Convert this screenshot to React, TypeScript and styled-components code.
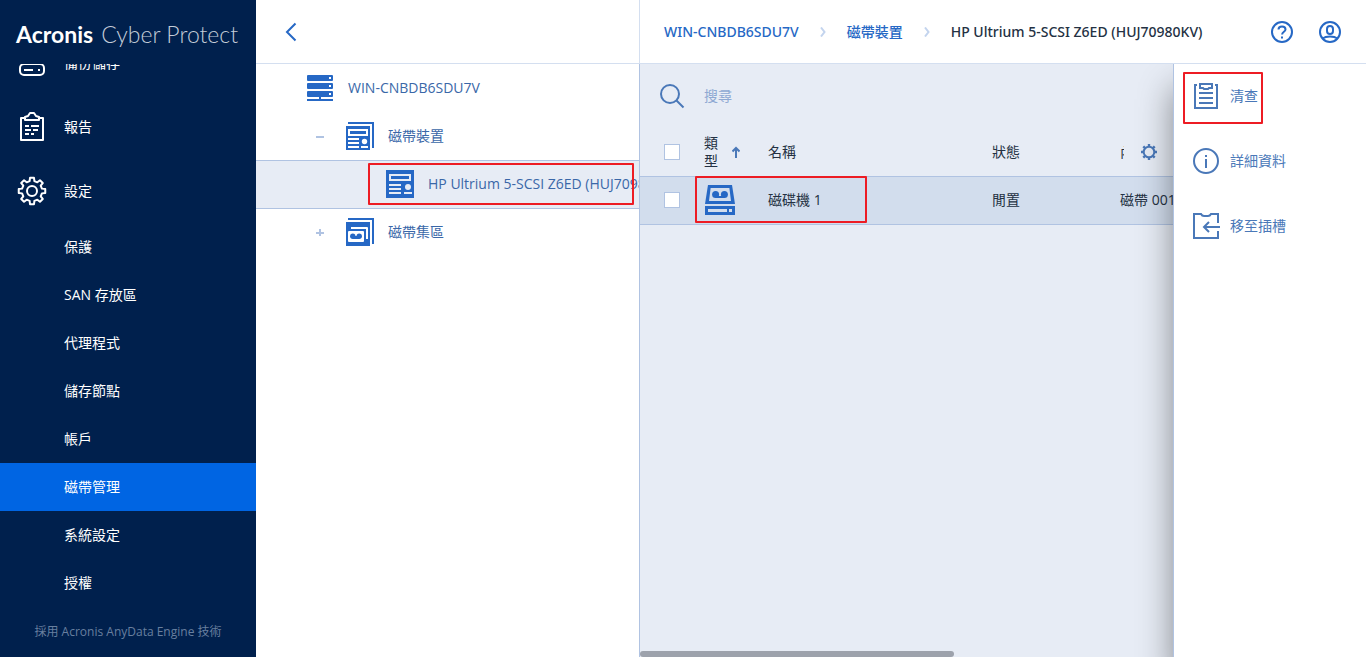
import React, { useLayoutEffect, useRef } from "react";
import styled, { createGlobalStyle, css } from "styled-components";

const color = {
  navy: "#00204d",
  active: "#0065e3",
  blue: "#2668c5",
  action: "#4a78b8",
  line: "#b0c3e2",
  headerLine: "#d4dff0",
  panel: "#e7ecf5",
  selected: "#d2dded",
  text: "#243143",
  link: "#3a67a8",
  mark: "#ed1c24",
};

const GlobalStyle = createGlobalStyle`
  *, *::before, *::after { box-sizing: border-box; }
  body {
    margin: 0;
    font: 14px/18px "Open Sans", "Noto Sans CJK TC", sans-serif;
    color: ${color.text};
  }
  button { font: inherit; color: inherit; border: 0; padding: 0; background: none; cursor: pointer; }
  a { color: inherit; text-decoration: none; }
  svg { display: block; flex: none; }
  ul, ol { list-style: none; margin: 0; padding: 0; }
`;

const Page = styled.div`
  display: flex;
  height: 100vh;
  overflow: hidden;
`;

const Sidebar = styled.aside`
  display: flex;
  flex-direction: column;
  flex: none;
  width: 256px;
  background: ${color.navy};
  color: #fff;
`;

const Logo = styled.div`
  display: flex;
  align-items: baseline;
  flex: none;
  gap: 8px;
  height: 64px;
  padding: 20px 0 0 16px;
  font: 700 23px/28px Lato, sans-serif;
  white-space: nowrap;
`;

const LogoProduct = styled.span`
  color: #c3ccd8;
  font-weight: 300;
`;

const Nav = styled.nav`
  flex: 1;
  min-height: 0;
  overflow-y: auto;
  scrollbar-width: none;
`;

const NavLink = styled.a`
  display: flex;
  align-items: center;
  height: 64px;
`;

const NavIcon = styled.span`
  display: flex;
  justify-content: center;
  width: 64px;
`;

const SubLink = styled.a<{ $active?: boolean }>`
  display: flex;
  align-items: center;
  height: 48px;
  padding-left: 64px;
  background: ${(p) => (p.$active ? color.active : "transparent")};
`;

const PoweredBy = styled.footer`
  display: flex;
  align-items: center;
  justify-content: center;
  flex: none;
  height: 50px;
  font-size: 12px;
  color: #687f9f;
`;

const TreePanel = styled.section`
  display: flex;
  flex-direction: column;
  flex: none;
  width: 384px;
  background: #fff;
`;

const TopBar = styled.header<{ $divided?: boolean }>`
  display: flex;
  align-items: center;
  flex: none;
  height: 64px;
  background: #fff;
  border-bottom: 1px solid ${color.headerLine};
  border-right: ${(p) => (p.$divided ? `1px solid ${color.headerLine}` : "0")};
`;

const BackButton = styled.button`
  display: flex;
  align-items: center;
  justify-content: center;
  width: 70px;
  height: 48px;
`;

const Tree = styled.ul`
  flex: 1;
  overflow: hidden;
  border-right: 1px solid ${color.line};
`;

const TreeRow = styled.li<{ $level: number; $selected?: boolean }>`
  position: relative;
  display: flex;
  align-items: center;
  height: 48px;
  padding-left: ${(p) => 44 + p.$level * 40}px;
  color: ${color.link};
  white-space: nowrap;
  ${(p) =>
    p.$selected &&
    css`
      background: ${color.panel};
      box-shadow: inset 0 1px ${color.line}, 0 1px ${color.line};
    `}
`;

const TreeIcon = styled.span`
  display: flex;
  justify-content: center;
  flex: none;
  width: 40px;
  margin-right: 8px;
`;

const Expander = styled.button`
  display: flex;
  justify-content: center;
  flex: none;
  width: 40px;
  margin-left: -40px;
`;

const Main = styled.main`
  display: flex;
  flex-direction: column;
  flex: 1;
  min-width: 0;
`;

const Breadcrumbs = styled.ol`
  display: flex;
  align-items: center;
  flex: 1;
  min-width: 0;
  padding-left: 24px;
  white-space: nowrap;
  font-family: "Noto Sans", "Noto Sans CJK TC", sans-serif;
  font-weight: 500;
`;

const Crumb = styled.li<{ $current?: boolean }>`
  display: flex;
  align-items: center;
  color: ${(p) => (p.$current ? color.text : color.blue)};
`;

const Separator = styled.span`
  display: flex;
  justify-content: center;
  width: 48px;
`;

const TopActions = styled.div`
  display: flex;
  padding-right: 12px;
`;

const IconButton = styled.button`
  display: flex;
  align-items: center;
  justify-content: center;
  width: 48px;
  height: 48px;
`;

const Workspace = styled.div`
  display: flex;
  flex: 1;
  min-height: 0;
  overflow: hidden;
`;

const ListArea = styled.section`
  display: flex;
  flex-direction: column;
  flex: 1;
  min-width: 0;
  background: ${color.panel};
`;

const SearchBar = styled.label`
  display: flex;
  align-items: center;
  height: 64px;
`;

const SearchIconBox = styled.span`
  display: flex;
  justify-content: center;
  width: 64px;
`;

const SearchInput = styled.input`
  flex: 1;
  min-width: 0;
  padding: 0;
  border: 0;
  outline: 0;
  background: none;
  font: inherit;
  &::placeholder { color: #8fa9d3; opacity: 1; }
`;

const TableArea = styled.div`
  position: relative;
  flex: 1;
  overflow: hidden;
`;

const Table = styled.table`
  width: 905px;
  table-layout: fixed;
  border-collapse: separate;
  border-spacing: 0;
`;

const HeadCell = styled.th<{ $width?: number }>`
  width: ${(p) => (p.$width ? `${p.$width}px` : "auto")};
  height: 48px;
  padding: 0;
  font-weight: 400;
  text-align: left;
`;

const SortHeader = styled.button`
  display: flex;
  align-items: center;
  gap: 12px;
  text-align: left;
`;

const SortLabel = styled.span`
  width: 16px;
`;

const Cell = styled.td`
  position: relative;
  height: 49px;
  padding: 0 0 1px;
  background: ${color.selected};
  border: solid ${color.line};
  border-width: 1px 0;
`;

const Check = styled.input`
  display: block;
  appearance: none;
  width: 16px;
  height: 16px;
  margin: 0 0 0 24px;
  background: #fff;
  border: 1px solid ${color.line};
`;

const ColumnSettings = styled.button`
  position: absolute;
  top: 0;
  right: 0;
  display: flex;
  align-items: center;
  justify-content: center;
  width: 49px;
  height: 48px;
  background: ${color.panel};
`;

const ScrollTrack = styled.div`
  flex: none;
  height: 6px;
`;

const ScrollThumb = styled.div`
  width: 59%;
  height: 6px;
  border-radius: 3px;
  background: #9da2ac;
`;

const ActionPanel = styled.aside`
  position: relative;
  display: flex;
  flex-direction: column;
  gap: 1px;
  flex: none;
  width: 193px;
  background: #fff;
  border-left: 1px solid ${color.line};
  box-shadow: 0 24px 32px rgba(0, 0, 0, 0.42);
`;

const ActionButton = styled.button`
  position: relative;
  display: flex;
  align-items: center;
  height: 64px;
  color: ${color.action};
`;

const ActionIcon = styled.span`
  display: flex;
  justify-content: center;
  width: 64px;
  margin-right: -8px;
`;

const Mark = styled.span<{ $top: number; $left: number; $width: number; $height: number }>`
  position: absolute;
  z-index: 1;
  top: ${(p) => p.$top}px;
  left: ${(p) => p.$left}px;
  width: ${(p) => p.$width}px;
  height: ${(p) => p.$height}px;
  border: 2px solid ${color.mark};
  border-radius: 1px;
  pointer-events: none;
`;

/* Outline of a toothed wheel centred on (c, c). */
function gearPath(c: number, outer: number, inner: number, teeth: number) {
  const step = (Math.PI * 2) / teeth;
  const points: string[] = [];
  for (let i = 0; i < teeth; i++) {
    const a = i * step - Math.PI / 2;
    const pairs: [number, number][] = [
      [-0.3, inner],
      [-0.19, outer],
      [0.19, outer],
      [0.3, inner],
    ];
    pairs.forEach(([t, r]) => {
      points.push(`${(c + r * Math.cos(a + t * step)).toFixed(2)} ${(c + r * Math.sin(a + t * step)).toFixed(2)}`);
    });
  }
  return `M${points.join("L")}Z`;
}

const StorageIcon = () => (
  <svg width="26" height="26" viewBox="0 0 26 26" fill="none" stroke="#fff" strokeWidth="2">
    <rect x="1" y="1" width="24" height="10" rx="4" />
    <rect x="1" y="14" width="24" height="11" rx="4" />
    <path d="M5 6h9M19 6h2M5 20h9M19 20h2" />
  </svg>
);

const ReportIcon = () => (
  <svg width="26" height="30" viewBox="0 0 26 30" fill="none" stroke="#fff" strokeWidth="2" strokeLinejoin="round">
    <path d="M6 6H2v22h22V6h-4" />
    <path d="M6 8V5l3-1 2-3h4l2 3 3 1v3z" />
    <path d="M6 14h4M12 14h8M6 18h6M14 18h5M6 22h4M12 22h3" />
  </svg>
);

const SettingsIcon = () => (
  <svg width="30" height="30" viewBox="0 0 30 30" fill="none" stroke="#fff" strokeWidth="2" strokeLinejoin="round">
    <path d={gearPath(15, 13.4, 10.2, 8)} />
    <circle cx="15" cy="15" r="5" />
  </svg>
);

const BackIcon = () => (
  <svg width="12" height="20" viewBox="0 0 12 20" fill="none" stroke={color.blue} strokeWidth="2">
    <path d="M10.500 1.500L2 10l8.500 8.500" />
  </svg>
);

const ServerIcon = () => (
  <svg width="26" height="26" viewBox="0 0 26 26" fill={color.blue}>
    <rect width="26" height="6" rx="1" />
    <rect y="8" width="26" height="6" rx="1" />
    <rect y="16" width="26" height="6" rx="1" />
    <path d="M12 22h2v2h12v2H0v-2h12z" />
    <path fill="#fff" d="M22 2h2v2h-2zM22 10h2v2h-2zM22 18h2v2h-2z" />
  </svg>
);

const StackEdge = () => <path d="M2 0h26v26h-2V2H2z" fill={color.blue} />;

const DevicesIcon = () => (
  <svg width="28" height="28" viewBox="0 0 28 28">
    <StackEdge />
    <path d="M0 4h24v24H0z" fill={color.blue} />
    <path d="M2 7h20v7H2zM2 16h11v2H2zM2 20h11v2H2zM2 24h11v2H2zM15 24h7v2h-7z" fill="#fff" />
    <path d="M4 9h16v3H4z" fill={color.blue} />
    <circle cx="18.500" cy="19.500" r="2.700" fill="#fff" />
  </svg>
);

const DeviceIcon = () => (
  <svg width="28" height="28" viewBox="0 0 28 28">
    <path d="M0 0h28v28H0z" fill={color.blue} />
    <path d="M3 4h22v7H3zM3 14h12v2H3zM3 18h12v2H3zM3 22h12v2H3zM18 22h8v2h-8z" fill={color.panel} />
    <path d="M5 6h18v3H5z" fill={color.blue} />
    <circle cx="22" cy="17" r="3" fill={color.panel} />
  </svg>
);

const PoolsIcon = () => (
  <svg width="28" height="28" viewBox="0 0 28 28">
    <StackEdge />
    <path d="M0 4h24v24H0z" fill={color.blue} />
    <path d="M5 9h16q1 0 1 1v11h-2V11H5z" fill="#fff" />
    <rect x="2" y="13" width="16" height="11" rx="1" fill="#fff" />
    <path d="M7 18h6v3H7z" fill={color.blue} />
    <circle cx="6.800" cy="18.300" r="2.700" fill={color.blue} />
    <circle cx="13.200" cy="18.300" r="2.700" fill={color.blue} />
  </svg>
);

const DriveIcon = () => (
  <svg width="32" height="30" viewBox="-1 0 32 30">
    <path d="M3 0h24l3 19H0z" fill={color.blue} />
    <path d="M5.600 3h18.800l1.600 13H4z" fill={color.selected} />
    <circle cx="10.600" cy="9.500" r="3.500" fill={color.blue} />
    <circle cx="19.400" cy="9.500" r="3.500" fill={color.blue} />
    <path d="M10.600 11h8.800v2h-8.800zM0 21h30v9H0z" fill={color.blue} />
    <path d="M3 24h19v3H3zM24 24h3v3h-3z" fill={color.selected} />
  </svg>
);

const MinusIcon = () => (
  <svg width="8" height="8" viewBox="0 0 8 8" stroke={color.line} strokeWidth="2">
    <path d="M0 5h8" />
  </svg>
);

const PlusIcon = () => (
  <svg width="8" height="8" viewBox="0 0 8 8" stroke={color.line} strokeWidth="2">
    <path d="M0 5h8M4 1v8" />
  </svg>
);

const CrumbIcon = () => (
  <svg width="6" height="10" viewBox="0 0 6 10" fill="none" stroke="#c3d4ee" strokeWidth="2">
    <path d="M1 .500L4.500 5 1 9.500" />
  </svg>
);

const HelpIcon = () => (
  <svg width="24" height="24" viewBox="0 0 24 24" fill="none" stroke={color.blue} strokeWidth="2">
    <circle cx="12" cy="12" r="10" />
    <path d="M8.500 9.500C8.500 7.500 10 6.500 12 6.500s3.500 1.200 3.500 3c0 2.300-3.400 2.300-3.400 5M12 16.500v2" />
  </svg>
);

const UserIcon = () => (
  <svg width="24" height="24" viewBox="0 0 24 24" fill="none" stroke={color.blue} strokeWidth="2">
    <circle cx="12" cy="12" r="10" />
    <rect x="9" y="6" width="6" height="8" rx="3" />
    <path d="M4.500 18.500c2-1.500 4.500-2 7.500-2s5.500.500 7.500 2" />
  </svg>
);

const SearchIcon = () => (
  <svg width="26" height="26" viewBox="0 0 26 26" fill="none" stroke={color.action} strokeWidth="2">
    <circle cx="11" cy="11" r="9" />
    <path d="M17.500 17.500l7 7" />
  </svg>
);

const SortIcon = () => (
  <svg width="8" height="12" viewBox="0 0 8 12" fill="none" stroke={color.action} strokeWidth="2">
    <path d="M4 12V2M.500 5.500L4 2l3.500 3.500" />
  </svg>
);

const ColumnsIcon = () => (
  <svg width="16" height="16" viewBox="0 0 16 16" fill="none" stroke={color.action}>
    <circle cx="8" cy="8" r="5.300" strokeWidth="2" />
    <path
      d="M8 0v3M8 13v3M0 8h3M13 8h3M2.300 2.300l2 2M11.700 11.700l2 2M13.700 2.300l-2 2M4.300 11.700l-2 2"
      strokeWidth="2.400"
    />
  </svg>
);

const InventoryIcon = () => (
  <svg width="26" height="26" viewBox="0 0 26 26" fill="none" stroke={color.action} strokeWidth="2">
    <path d="M4 2H2v23h22V2h-2" />
    <path d="M7 1h12v4h-3l-1 1h-4l-1-1H7zM6 10h14M6 15h14M6 20h14" />
  </svg>
);

const InfoIcon = () => (
  <svg width="26" height="26" viewBox="0 0 26 26" fill="none" stroke={color.action} strokeWidth="2">
    <circle cx="13" cy="13" r="12" />
    <path d="M13 7v2M13 11v9" />
  </svg>
);

const MoveIcon = () => (
  <svg width="28" height="26" viewBox="0 0 28 26" fill="none" stroke={color.action} strokeWidth="2">
    <path d="M26 10V1h-7c-1 2-2 2-3 2h-4c-1 0-2 0-3-2H2v24h24v-7" />
    <path d="M28 14H12M17 9l-5 5 5 5" />
  </svg>
);

const mainLinks = [
  { label: "備份儲存", icon: <StorageIcon /> },
  { label: "報告", icon: <ReportIcon /> },
  { label: "設定", icon: <SettingsIcon /> },
];

const subLinks = ["保護", "SAN 存放區", "代理程式", "儲存節點", "帳戶", "磁帶管理", "系統設定", "授權"];

export default function App() {
  const navRef = useRef<HTMLElement>(null);

  useLayoutEffect(() => {
    const nav = navRef.current;
    if (nav) nav.scrollTop = nav.scrollHeight;
  }, []);

  return (
    <Page>
      <GlobalStyle />
      <Sidebar>
        <Logo>
          Acronis <LogoProduct>Cyber Protect</LogoProduct>
        </Logo>
        <Nav ref={navRef}>
          {mainLinks.map((item) => (
            <NavLink key={item.label} href="#">
              <NavIcon>{item.icon}</NavIcon>
              {item.label}
            </NavLink>
          ))}
          {subLinks.map((label) => (
            <SubLink key={label} href="#" $active={label === "磁帶管理"}>
              {label}
            </SubLink>
          ))}
        </Nav>
        <PoweredBy>採用 Acronis AnyData Engine 技術</PoweredBy>
      </Sidebar>

      <TreePanel>
        <TopBar $divided>
          <BackButton aria-label="返回">
            <BackIcon />
          </BackButton>
        </TopBar>
        <Tree>
          <TreeRow $level={0}>
            <TreeIcon><ServerIcon /></TreeIcon>
            WIN-CNBDB6SDU7V
          </TreeRow>
          <TreeRow $level={1}>
            <Expander aria-label="收合"><MinusIcon /></Expander>
            <TreeIcon><DevicesIcon /></TreeIcon>
            磁帶裝置
          </TreeRow>
          <TreeRow $level={2} $selected>
            <TreeIcon><DeviceIcon /></TreeIcon>
            HP Ultrium 5-SCSI Z6ED (HUJ70980KV)
            <Mark $top={3} $left={112} $width={266} $height={42} />
          </TreeRow>
          <TreeRow $level={1}>
            <Expander aria-label="展開"><PlusIcon /></Expander>
            <TreeIcon><PoolsIcon /></TreeIcon>
            磁帶集區
          </TreeRow>
        </Tree>
      </TreePanel>

      <Main>
        <TopBar>
          <Breadcrumbs>
            <Crumb>
              <a href="#">WIN-CNBDB6SDU7V</a>
              <Separator><CrumbIcon /></Separator>
            </Crumb>
            <Crumb>
              <a href="#">磁帶裝置</a>
              <Separator><CrumbIcon /></Separator>
            </Crumb>
            <Crumb $current>HP Ultrium 5-SCSI Z6ED (HUJ70980KV)</Crumb>
          </Breadcrumbs>
          <TopActions>
            <IconButton aria-label="說明"><HelpIcon /></IconButton>
            <IconButton aria-label="帳戶"><UserIcon /></IconButton>
          </TopActions>
        </TopBar>
        <Workspace>
          <ListArea>
            <SearchBar>
              <SearchIconBox><SearchIcon /></SearchIconBox>
              <SearchInput type="text" placeholder="搜尋" aria-label="搜尋" />
            </SearchBar>
            <TableArea>
              <Table>
                <thead>
                  <tr>
                    <HeadCell $width={64}>
                      <Check type="checkbox" aria-label="全選" />
                    </HeadCell>
                    <HeadCell $width={64}>
                      <SortHeader>
                        <SortLabel>類型</SortLabel>
                        <SortIcon />
                      </SortHeader>
                    </HeadCell>
                    <HeadCell $width={224}>名稱</HeadCell>
                    <HeadCell $width={128}>狀態</HeadCell>
                    <HeadCell>內容</HeadCell>
                  </tr>
                </thead>
                <tbody>
                  <tr>
                    <Cell>
                      <Check type="checkbox" aria-label="磁碟機 1" />
                      <Mark $top={-1} $left={55} $width={172} $height={47} />
                    </Cell>
                    <Cell><DriveIcon /></Cell>
                    <Cell>磁碟機 1</Cell>
                    <Cell>閒置</Cell>
                    <Cell>磁帶 001</Cell>
                  </tr>
                </tbody>
              </Table>
              <ColumnSettings aria-label="欄設定">
                <ColumnsIcon />
              </ColumnSettings>
            </TableArea>
            <ScrollTrack>
              <ScrollThumb />
            </ScrollTrack>
          </ListArea>
          <ActionPanel>
            <ActionButton>
              <ActionIcon><InventoryIcon /></ActionIcon>
              清查
              <Mark $top={8} $left={9} $width={80} $height={52} />
            </ActionButton>
            <ActionButton>
              <ActionIcon><InfoIcon /></ActionIcon>
              詳細資料
            </ActionButton>
            <ActionButton>
              <ActionIcon><MoveIcon /></ActionIcon>
              移至插槽
            </ActionButton>
          </ActionPanel>
        </Workspace>
      </Main>
    </Page>
  );
}
